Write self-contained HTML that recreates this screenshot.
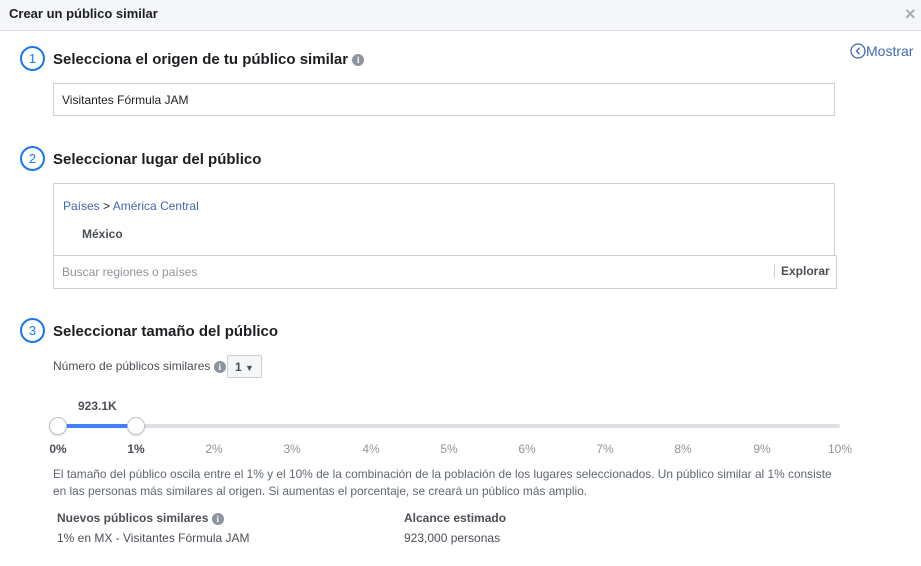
<!DOCTYPE html><html><head><meta charset="utf-8"><style>
*{margin:0;padding:0;box-sizing:border-box}
body{width:921px;height:566px;background:#fff;font-family:"Liberation Sans",Helvetica,sans-serif;color:#1c1e21;position:relative;overflow:hidden}
.a{position:absolute;white-space:nowrap}
.hdr{position:absolute;left:0;top:0;width:921px;height:31px;background:#f5f6f7;border-bottom:1px solid #dddfe2}
.circ{position:absolute;width:25px;height:25px;border:2px solid #1877f2;border-radius:50%;color:#1877f2;font-size:13px;text-align:center;line-height:21px}
.h{font-size:15px;font-weight:bold;color:#1c1e21}
.box{position:absolute;border:1px solid #ccd0d5;background:#fff}
.info{display:inline-block;width:12px;height:12px;border-radius:50%;background:#8d949e;color:#fff;font-size:9px;font-weight:bold;text-align:center;line-height:12px;font-family:"Liberation Serif",serif;vertical-align:middle}
.lbl{font-size:12px;color:#90949c;transform:translateX(-50%)}
.th{position:absolute;width:18px;height:18px;border-radius:50%;background:#fff;border:1px solid #bec3c9;box-shadow:0 1px 2px rgba(0,0,0,.15)}
.p{font-size:11.9px;color:#606770}
.t{font-size:12px}
</style></head><body>
<div class="hdr"></div>
<div class="a" style="left:9px;top:6px;font-size:13px;font-weight:bold;color:#1c1e21">Crear un público similar</div>
<div class="a" style="left:905px;top:4px;font-size:18px;color:#a8abaf;font-weight:bold">×</div>
<svg class="a" style="left:850px;top:43px" width="16" height="16" viewBox="0 0 16 16"><circle cx="8" cy="8" r="7" fill="none" stroke="#4267b2" stroke-width="1.3"/><path d="M9.5 4.8 6.5 8l3 3.2" fill="none" stroke="#4267b2" stroke-width="1.4"/></svg>
<div class="a" style="left:866px;top:43px;font-size:14px;color:#4267b2">Mostrar</div>

<div class="circ" style="left:20px;top:46px">1</div>
<div class="a h" style="left:53px;top:51px">Selecciona el origen de tu público similar <span class="info">i</span></div>
<div class="box" style="left:53px;top:83px;width:782px;height:33px"></div>
<div class="a t" style="left:62px;top:93px">Visitantes Fórmula JAM</div>

<div class="circ" style="left:20px;top:146px">2</div>
<div class="a h" style="left:53px;top:151px">Seleccionar lugar del público</div>
<div class="box" style="left:53px;top:183px;width:782px;height:73px"></div>
<div class="a t" style="left:63px;top:199px;color:#4267b2">Países <span style="color:#1c1e21">&gt;</span> América Central</div>
<div class="a t" style="left:82px;top:227px;font-weight:bold;color:#4b4f56">México</div>
<div class="box" style="left:53px;top:255px;width:784px;height:34px"></div>
<div class="a t" style="left:62px;top:265px;color:#90949c">Buscar regiones o países</div>
<div class="a" style="left:774px;top:264px;width:1px;height:14px;background:#ccd0d5"></div>
<div class="a t" style="left:781px;top:264px;font-weight:bold;color:#4b4f56">Explorar</div>

<div class="circ" style="left:20px;top:318px">3</div>
<div class="a h" style="left:53px;top:323px">Seleccionar tamaño del público</div>
<div class="a t" style="left:53px;top:359px;color:#4b4f56">Número de públicos similares <span class="info">i</span></div>
<div class="box" style="left:227px;top:355px;width:35px;height:23px;background:#f5f6f7;border-color:#ccd0d5;border-radius:2px"></div>
<div class="a t" style="left:235px;top:360px;font-weight:bold;color:#4b4f56">1 <span style="font-size:9px">▼</span></div>

<div class="a t" style="left:78px;top:399px;font-weight:bold;color:#4b4f56">923.1K</div>
<div class="a" style="left:58px;top:424px;width:782px;height:4px;background:#dddfe2;border-radius:2px"></div>
<div class="a" style="left:58px;top:424px;width:78px;height:4px;background:#4080ff"></div>
<div class="th" style="left:49px;top:417px"></div>
<div class="th" style="left:127px;top:417px"></div>
<div class="a lbl" style="left:58px;top:442px;font-weight:bold;color:#4b4f56">0%</div>
<div class="a lbl" style="left:136px;top:442px;font-weight:bold;color:#4b4f56">1%</div>
<div class="a lbl" style="left:214px;top:442px">2%</div>
<div class="a lbl" style="left:292px;top:442px">3%</div>
<div class="a lbl" style="left:371px;top:442px">4%</div>
<div class="a lbl" style="left:449px;top:442px">5%</div>
<div class="a lbl" style="left:527px;top:442px">6%</div>
<div class="a lbl" style="left:605px;top:442px">7%</div>
<div class="a lbl" style="left:683px;top:442px">8%</div>
<div class="a lbl" style="left:762px;top:442px">9%</div>
<div class="a lbl" style="left:840px;top:442px">10%</div>

<div class="a p" style="left:53px;top:467px">El tamaño del público oscila entre el 1% y el 10% de la combinación de la población de los lugares seleccionados. Un público similar al 1% consiste</div>
<div class="a p" style="left:53px;top:484px">en las personas más similares al origen. Si aumentas el porcentaje, se creará un público más amplio.</div>

<div class="a t" style="left:57px;top:511px;font-weight:bold;color:#4b4f56">Nuevos públicos similares <span class="info">i</span></div>
<div class="a t" style="left:404px;top:511px;font-weight:bold;color:#4b4f56">Alcance estimado</div>
<div class="a t" style="left:57px;top:531px;color:#4b4f56">1% en MX - Visitantes Fórmula JAM</div>
<div class="a t" style="left:404px;top:531px;color:#4b4f56">923,000 personas</div>
</body></html>
